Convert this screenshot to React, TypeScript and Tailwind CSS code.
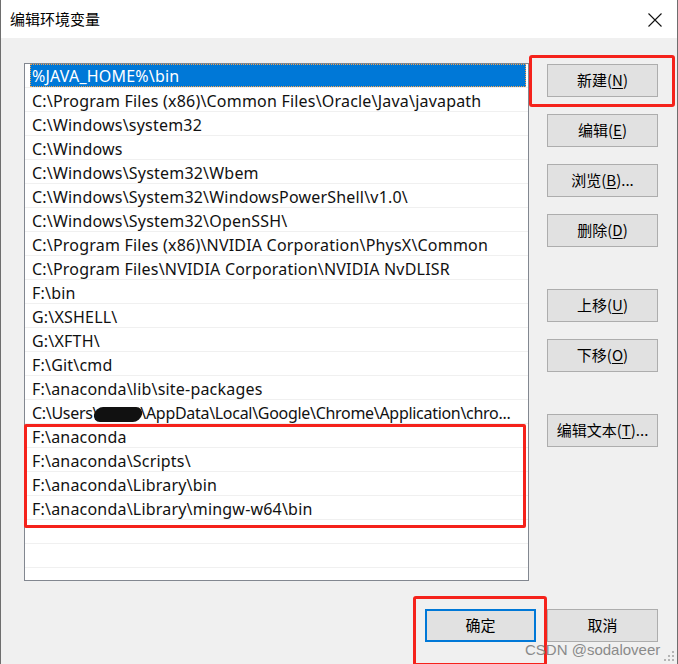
import React from "react";

const rows = [
  "%JAVA_HOME%\\bin",
  "C:\\Program Files (x86)\\Common Files\\Oracle\\Java\\javapath",
  "C:\\Windows\\system32",
  "C:\\Windows",
  "C:\\Windows\\System32\\Wbem",
  "C:\\Windows\\System32\\WindowsPowerShell\\v1.0\\",
  "C:\\Windows\\System32\\OpenSSH\\",
  "C:\\Program Files (x86)\\NVIDIA Corporation\\PhysX\\Common",
  "C:\\Program Files\\NVIDIA Corporation\\NVIDIA NvDLISR",
  "F:\\bin",
  "G:\\XSHELL\\",
  "G:\\XFTH\\",
  "F:\\Git\\cmd",
  "F:\\anaconda\\lib\\site-packages",
  "USERS",
  "F:\\anaconda",
  "F:\\anaconda\\Scripts\\",
  "F:\\anaconda\\Library\\bin",
  "F:\\anaconda\\Library\\mingw-w64\\bin",
];

const font = { fontFamily: '"Noto Sans", "Noto Sans CJK SC", sans-serif' };

// label with an underlined access key, e.g. 新建(N)
const Btn = ({
  label,
  k,
  tail = "",
  className = "",
  focus = false,
}: {
  label: string;
  k?: string;
  tail?: string;
  className?: string;
  focus?: boolean;
}) => (
  <button
    className={
      "w-[111px] h-[33px] bg-[#e1e1e1] text-[15px] text-black flex items-center justify-center " +
      (focus ? "border-2 border-[#0078d7] " : "border border-[#adadad] ") +
      className
    }
  >
    {label}
    {k && (
      <>
        (<span className="underline underline-offset-2">{k}</span>){tail}
      </>
    )}
  </button>
);

const Row = ({ text, selected }: { text: string; selected?: boolean }) => {
  if (selected) {
    return (
      <div className="h-[24px] border-b border-[#f0f0f0] pl-[5px] pr-[2px]">
        <div className="h-[23px] bg-[#0078d7] text-white pl-[2px] pt-[1px] flex items-center outline-1 outline-dotted outline-[#f7a24a] -outline-offset-1">
          {text}
        </div>
      </div>
    );
  }
  return (
    <div className="h-[24px] border-b border-[#f0f0f0] pl-[7px] pt-[2px] flex items-center whitespace-nowrap overflow-hidden">
      {text === "USERS" ? (
        <span className="tracking-[-0.3px]">
          C:\Users\
          <span className="inline-block align-middle w-[48px] h-[15px] bg-[#111] rounded-full -ml-[4px] mr-[-2px] -skew-x-12" />
          \AppData\Local\Google\Chrome\Application\chro...
        </span>
      ) : (
        text
      )}
    </div>
  );
};

export default function App() {
  return (
    <div
      className="relative w-[678px] h-[664px] bg-[#f0f0f0] border-l border-r border-[#6e6e6e] overflow-hidden"
      style={font}
    >
      {/* title bar */}
      <div className="h-[38px] bg-white flex items-center justify-between pl-[9px] pr-[14px]">
        <span
          className="text-[15px] text-black"
          style={{ fontFamily: '"Noto Sans CJK SC", sans-serif' }}
        >
          编辑环境变量
        </span>
        <svg width="16" height="16" viewBox="0 0 16 16" className="mt-[1px]">
          <path d="M1.5 1.5 L14.5 14.5 M14.5 1.5 L1.5 14.5" stroke="#111" strokeWidth="1.1" />
        </svg>
      </div>

      <div className="flex pl-[23px] pt-[25px]">
        {/* path list */}
        <div className="w-[505px] h-[518px] bg-white border border-[#828790] overflow-hidden text-[16px] tracking-[0.2px] text-[#111]">
          {rows.map((r, i) => (
            <Row key={i} text={r} selected={i === 0} />
          ))}
          <div className="h-[24px] border-b border-[#f0f0f0]" />
          <div className="h-[24px] border-b border-[#f0f0f0]" />
          <div className="h-[24px] border-b border-[#f0f0f0]" />
        </div>

        {/* side buttons */}
        <div className="ml-[18px] pt-[1px] flex flex-col" style={{ fontFamily: '"Noto Sans CJK SC", sans-serif' }}>
          <Btn label="新建" k="N" />
          <Btn label="编辑" k="E" className="mt-[17px]" />
          <Btn label="浏览" k="B" tail="..." className="mt-[17px]" />
          <Btn label="删除" k="D" className="mt-[17px]" />
          <Btn label="上移" k="U" className="mt-[42px]" />
          <Btn label="下移" k="O" className="mt-[17px]" />
          <Btn label="编辑文本" k="T" tail="..." className="mt-[42px]" />
        </div>
      </div>

      {/* bottom buttons */}
      <div className="flex justify-end gap-[11px] pr-[19px] mt-[28px]" style={{ fontFamily: '"Noto Sans CJK SC", sans-serif' }}>
        <Btn label="确定" focus />
        <Btn label="取消" />
      </div>

      {/* red annotation boxes */}
      <div className="absolute left-[528px] top-[55px] w-[146px] h-[52px] border-[3px] border-[#f5221b] rounded-[3px] pointer-events-none" />
      <div className="absolute left-[23px] top-[424px] w-[502px] h-[104px] border-[3px] border-[#f5221b] rounded-[2px] pointer-events-none" />
      <div className="absolute left-[412px] top-[596px] w-[134px] h-[70px] border-[3px] border-[#f5221b] rounded-[3px] pointer-events-none" />

      {/* watermark */}
      <div
        className="absolute left-[524px] top-[639px] text-[15px] text-[#8a8a8a] whitespace-nowrap"
        style={{ fontFamily: '"Liberation Sans", sans-serif' }}
      >
        CSDN @sodaloveer
      </div>

      {/* resize grip */}
      <svg className="absolute right-[2px] bottom-[2px]" width="12" height="12" viewBox="0 0 12 12">
        {[
          [9, 1],
          [5, 5],
          [9, 5],
          [1, 9],
          [5, 9],
          [9, 9],
        ].map(([x, y], i) => (
          <rect key={i} x={x} y={y} width="2" height="2" fill="#b4b4b4" />
        ))}
      </svg>
    </div>
  );
}
